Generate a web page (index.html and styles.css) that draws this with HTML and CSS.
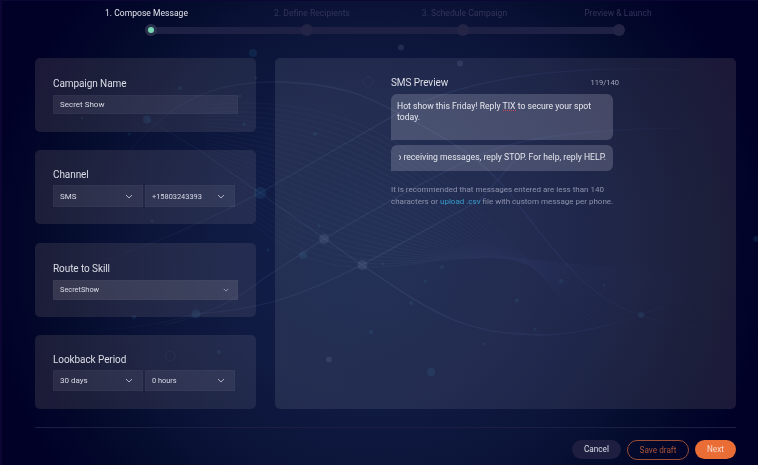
FILE: index.html
```html
<!DOCTYPE html>
<html lang="en">
<head>
<meta charset="utf-8">
<title>Compose Message</title>
<link rel="stylesheet" href="styles.css">
</head>
<body>
<svg class="backdrop" viewBox="0 0 758 465" aria-hidden="true">
  <defs>
    <linearGradient id="fade" gradientUnits="userSpaceOnUse" x1="60" y1="0" x2="740" y2="0">
      <stop offset="0" stop-color="#6f8fc8" stop-opacity="0"/>
      <stop offset=".3" stop-color="#6f8fc8" stop-opacity=".7"/>
      <stop offset=".5" stop-color="#7590c4" stop-opacity="1"/>
      <stop offset=".75" stop-color="#4560c4" stop-opacity=".75"/>
      <stop offset="1" stop-color="#4050b4" stop-opacity="0"/>
    </linearGradient>
  </defs>
  <g id="mesh" class="mesh"></g>
  <g class="waves">
    <path d="M130 150C180 92 225 81 280 82C345 84 370 98 402 115C450 140 485 160 515 200C570 275 600 303 641 315Q672 327 715 329"/>
    <path d="M147 119L199 150L260 193L362 265C440 318 465 334 545 335Q590 333 641 315Q690 297 720 272"/>
    <path d="M90 265Q170 240 260 193L400 112Q500 62 680 70"/>
    <path d="M165 325Q225 310 260 281L324 239Q420 182 480 155T700 128"/>
    <path d="M30 330Q130 335 195 314C265 309 300 296 362 265L480 200L515 160"/>
  </g>
  <g class="nodes">
    <circle cx="324" cy="239" r="5"/><circle cx="362.500" cy="265" r="5"/>
    <circle cx="401" cy="47.500" r="3"/><circle cx="460" cy="63.500" r="3"/>
    <circle cx="329" cy="359.500" r="3"/>
    <circle class="hollow" cx="368" cy="82" r="5"/><circle class="hollow" cx="170" cy="356" r="5"/>
  </g>
  <g class="sparks">
    <circle cx="260" cy="193" r="6"/><circle cx="147" cy="119.500" r="4"/>
    <circle cx="253" cy="53" r="4"/><circle cx="196" cy="314" r="4.500"/>
    <circle cx="431" cy="372" r="4"/><circle cx="303" cy="255" r="4"/>
    <circle cx="641" cy="315" r="3"/><circle cx="134" cy="317" r="2"/>
    <circle cx="371" cy="332" r="2"/><circle cx="517" cy="300.500" r="2"/>
    <circle cx="561" cy="281" r="2"/><circle cx="425" cy="281" r="1.500"/>
    <circle cx="442" cy="267" r="1.800"/><circle cx="411" cy="303" r="2"/>
    <circle cx="180" cy="88" r="2"/><circle cx="256" cy="78" r="1.500"/>
    <circle cx="240" cy="96" r="1.500"/><circle cx="315" cy="134" r="2"/>
    <circle cx="244" cy="124" r="1.500"/><circle cx="129" cy="134" r="1.500"/>
    <circle cx="219" cy="352" r="2"/><circle cx="268" cy="250" r="1.500"/>
    <circle cx="383" cy="264" r="1.500"/><circle cx="535" cy="329" r="1.500"/>
    <circle cx="152" cy="221" r="1.500"/><circle cx="756" cy="239" r="3"/>
    <circle cx="604" cy="285" r="1.200"/><circle cx="484" cy="344" r="1.200"/>
    <circle cx="319" cy="226" r="1.500"/><circle cx="82" cy="118" r="1.200"/>
  </g>
</svg>
<main class="page">
  <ol class="stepper">
    <li class="step active"><span class="step-label">1. Compose Message</span><i class="dot"></i></li>
    <li class="step"><span class="step-label">2. Define Recipients</span><i class="dot"></i></li>
    <li class="step"><span class="step-label">3. Schedule Campaign</span><i class="dot"></i></li>
    <li class="step"><span class="step-label">Preview &amp; Launch</span><i class="dot"></i></li>
  </ol>
  <div class="columns">
    <div class="settings">
      <section class="card name-card">
        <h2>Campaign Name</h2>
        <div class="field"><span>Secret Show</span></div>
      </section>
      <section class="card">
        <h2>Channel</h2>
        <div class="pair">
          <div class="field"><span>SMS</span><svg class="chevron" viewBox="0 0 8 5"><path d="M1 1L4 4L7 1"/></svg></div>
          <div class="field"><span class="phone">+15803243393</span><svg class="chevron" viewBox="0 0 8 5"><path d="M1 1L4 4L7 1"/></svg></div>
        </div>
      </section>
      <section class="card skill-card">
        <h2>Route to Skill</h2>
        <div class="field"><span class="skill">SecretShow</span><svg class="chevron small" viewBox="0 0 8 5"><path d="M1 1L4 4L7 1"/></svg></div>
      </section>
      <section class="card lookback-card">
        <h2>Lookback Period</h2>
        <div class="pair">
          <div class="field"><span class="days">30 days</span><svg class="chevron" viewBox="0 0 8 5"><path d="M1 1L4 4L7 1"/></svg></div>
          <div class="field"><span class="hours">0 hours</span><svg class="chevron" viewBox="0 0 8 5"><path d="M1 1L4 4L7 1"/></svg></div>
        </div>
      </section>
    </div>
    <section class="preview">
      <header class="preview-head"><h2>SMS Preview</h2><span class="count">119/140</span></header>
      <div class="bubble message">Hot show this Friday! Reply <span class="misspelled">TIX</span> to secure your spot<br>today.</div>
      <div class="bubble footer-text"><div class="clip"><span>o receiving messages, reply STOP. For help, reply HELP.</span></div></div>
      <p class="hint">It is recommended that messages entered are less than 140<br>characters or <a>upload .csv</a> file with custom message per phone.</p>
    </section>
  </div>
  <footer class="actions">
    <button class="cancel">Cancel</button>
    <button class="draft">Save draft</button>
    <button class="next">Next</button>
  </footer>
</main>
<script src="mesh.js"></script>
</body>
</html>
```
FILE: styles.css
```css
* { box-sizing: border-box; }
body {
  margin: 0;
  width: 758px;
  height: 465px;
  overflow: hidden;
  color: #d9dae5;
  font-family: Roboto, "Liberation Sans", sans-serif;
  font-size: 8px;
  background: radial-gradient(ellipse 400px 390px at 378px 250px, #12204a 0%, #101b43 38%, #0b1438 62%, #030a2b 82%, #010027 100%);
  box-shadow: inset 2px 1px 0 #0b0634;
}
.backdrop { position: absolute; inset: 0; width: 758px; height: 465px; fill: none; }
.mesh { stroke: url(#fade); stroke-width: .8; opacity: .09; }
.waves { stroke: url(#fade); stroke-width: 1.3; opacity: .15; }
.nodes { fill: #7480aa; opacity: .21; }
.hollow { fill: none; stroke: #7480aa; opacity: .5; }
.sparks { fill: #2c7aa4; opacity: .17; }
.page { position: relative; height: 465px; padding: 7px 22px 0 35px; }

.stepper {
  display: grid;
  grid-template-columns: repeat(4, 156px);
  height: 51px;
  margin: 0 0 0 38px;
  padding: 0;
  list-style: none;
}
.step { position: relative; display: flex; flex-direction: column; align-items: center; color: #34345a; }
.step-label { height: 17px; line-height: 13px; font-size: 8.5px; letter-spacing: .04px; white-space: nowrap; }
.step:not(:last-child)::after {
  content: "";
  position: absolute;
  left: 78px;
  top: 20px;
  width: 156px;
  height: 7px;
  background: #1f2144;
}
.dot { width: 12px; height: 12px; border-radius: 50%; background: #232446; position: relative; z-index: 1; }
.active { color: #e4e5ee; }
.active .step-label { margin-left: -9px; }
.step:nth-child(2) .step-label { margin-left: 10px; }
.step:nth-child(3) .step-label { margin-left: 3px; }
.step:nth-child(4) .step-label { margin-left: -2px; }
.active .dot { border: 3px solid #29304e; background: #78d9b4; }

.columns { display: grid; grid-template-columns: 221px 461.5px; gap: 18.500px; height: 351px; }
.settings { display: grid; grid-template-rows: repeat(4, 74px); align-content: space-between; }
.card, .preview { border-radius: 5px; }
.card {
  padding: 17px 18px 0;
  background: linear-gradient(90deg, rgba(121, 108, 113, .225), rgba(125, 125, 140, .18));
}
h2 { margin: 0; font-size: 10px; line-height: 17px; height: 16px; font-weight: 400; letter-spacing: -.08px; white-space: nowrap; color: #dddee8; }
.field {
  display: flex;
  align-items: center;
  justify-content: space-between;
  height: 22px;
  padding: 0 9px 0 6px;
  background: rgba(145, 145, 160, .14);
  border: 1px solid rgba(145, 145, 170, .05);
  white-space: nowrap;
  font-size: 8px;
}
.name-card .field { height: 19px; margin-top: 4px; }
.pair { display: grid; grid-template-columns: 90px 90px; gap: 2px; margin-top: 3px; }
.card:nth-child(2) { padding-top: 16px; }
.skill-card .field { height: 20px; margin-top: 4px; padding-right: 8px; background: rgba(157, 153, 160, .21); }
.lookback-card { padding-top: 16px; }
.lookback-card .field { height: 21px; }
.phone { font-size: 7.4px; }
.skill { font-size: 7.4px; }
.hours { font-size: 7.4px; }
.chevron { width: 8px; height: 5px; fill: none; stroke: #b0b1c4; stroke-width: 1; }
.chevron.small { width: 6px; height: 4px; }

.preview { padding: 16px 123px 0 116.500px; background: linear-gradient(90deg, rgba(125, 136, 150, .18), rgba(118, 116, 142, .18) 65%, rgba(125, 112, 118, .22)); }
.preview-head { display: flex; justify-content: space-between; width: 228px; height: 17px; line-height: 17px; }
.count { color: #a5a6bc; font-size: 7.5px; letter-spacing: .02px; }
.bubble {
  width: 222px;
  border-radius: 6px 6px 6px 0;
  background: rgba(180, 180, 200, .26);
  color: #e6e7ee;
  font-size: 8.65px;
  line-height: 11px;
  white-space: nowrap;
}
.message { height: 46px; margin-top: 3px; padding: 7px 6px; }
.misspelled { background: repeating-linear-gradient(90deg, #d64058 0 1px, transparent 1px 2px) 0 100% / 100% 1px no-repeat; }
.footer-text { height: 26px; margin-top: 5px; padding: 7px 7px 0 8px; }
.clip { display: flex; justify-content: flex-end; overflow: hidden; }
.hint { margin: 13px 0 0; font-size: 8px; line-height: 11.500px; color: #8d93ac; white-space: nowrap; }
.hint a { color: #369bcc; }

.actions {
  display: flex;
  justify-content: flex-end;
  align-items: flex-start;
  gap: 6px;
  margin-top: 18px;
  padding-top: 12px;
  border-top: 1px solid #1c1f42;
}
button { height: 19px; padding: 0; border: 0; border-radius: 10px; font: 8.2px/19px Roboto, sans-serif; color: #dddfe9; }
.cancel { width: 49px; background: #1e1e40; }
.draft { width: 62px; height: 20px; border: 1px solid #9a4c36; background: transparent; color: #aa5439; }
.next { width: 41px; background: #e96d35; color: #f8d8cb; }
```
FILE: mesh.js
```js
// Family of curves blended between the upper and lower edge of the wave mesh.
const upper = [200, 106, 345, 88, 430, 155, 500, 230, 535, 265, 560, 300, 590, 335];
const lower = [215, 190, 300, 275, 345, 272, 420, 263, 530, 247, 550, 272, 720, 272];
const count = 26;
const mesh = document.getElementById("mesh");
for (let i = 0; i < count; i++) {
  const t = i / (count - 1);
  const p = upper.map((v, k) => (v + (lower[k] - v) * t).toFixed(1));
  const path = document.createElementNS("http://www.w3.org/2000/svg", "path");
  path.setAttribute("d", `M${p[0]} ${p[1]}C${p.slice(2, 8).join(" ")}C${p.slice(8).join(" ")}`);
  mesh.appendChild(path);
}
```
